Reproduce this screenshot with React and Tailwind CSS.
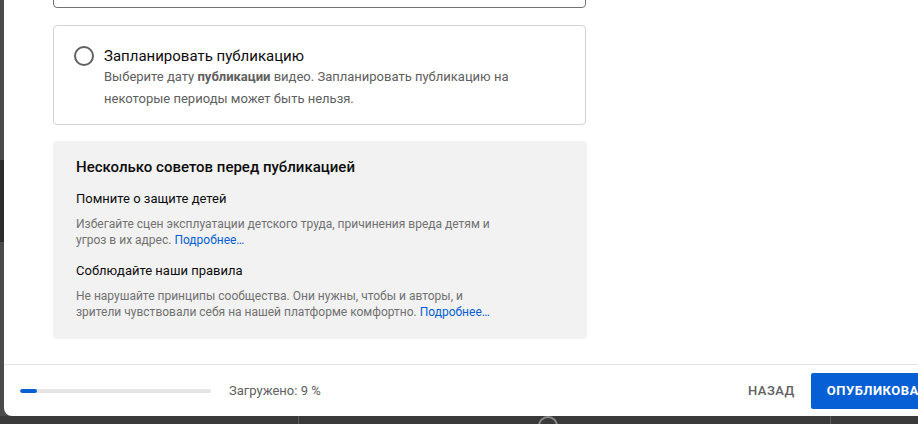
import React from "react";

const tips = [
  {
    title: "Помните о защите детей",
    text: "Избегайте сцен эксплуатации детского труда, причинения вреда детям и угроз в их адрес.",
  },
  {
    title: "Соблюдайте наши правила",
    text: "Не нарушайте принципы сообщества. Они нужны, чтобы и авторы, и зрители чувствовали себя на нашей платформе комфортно.",
  },
];

const App = () => {
  const progress = 9;

  return (
    <div className="relative w-[918px] h-[424px] overflow-hidden bg-[#4b4b4b] font-['Roboto','Liberation_Sans',sans-serif]">
      {/* backdrop behind the dialog */}
      <div className="absolute left-0 top-[160px] w-[6px] h-[82px] bg-[#2c2c2c]" />
      <div className="absolute left-0 top-[416px] w-[918px] h-[8px] bg-[#3a3a3a]" />
      <div className="absolute left-[298px] top-[416px] w-px h-[8px] bg-[#5a5a5a]" />
      <div className="absolute left-[830px] top-[416px] w-px h-[8px] bg-[#5a5a5a]" />
      <div className="absolute left-[538px] top-[416px] w-[20px] h-[20px] rounded-full border-2 border-[#8a8a8a]" />

      {/* dialog */}
      <div className="absolute left-[4px] top-0 w-[980px] h-[416px] bg-white rounded-bl-[8px] flex flex-col">
        <div className="flex-1 overflow-hidden pl-[49px]">
          <div className="w-[533px] h-[40px] -mt-[32px] border border-[#737373] rounded-[4px]" />

          {/* schedule option */}
          <div className="mt-[17px] w-[533px] h-[100px] border border-[#d3d3d3] rounded-[4px] pl-[20px] pt-[19px] flex gap-[10px]">
            <div className="mt-[1px] w-[20px] h-[20px] rounded-full border-2 border-[#606060] shrink-0" />
            <div className="w-[430px]">
              <div className="text-[15px] leading-[22px] text-[#0d0d0d]">
                Запланировать публикацию
              </div>
              <div className="-mt-[1px] text-[13px] leading-[22px] text-[#606060]">
                Выберите дату <span className="font-bold">публикации</span>{" "}
                видео. Запланировать публикацию на некоторые периоды может быть
                нельзя.
              </div>
            </div>
          </div>

          {/* tips */}
          <div className="mt-[16px] w-[534px] h-[198px] bg-[#f2f2f2] rounded-[4px] px-[23px] pt-[16px]">
            <div className="text-[15px] leading-[20px] font-medium text-[#0d0d0d]">
              Несколько советов перед публикацией
            </div>
            {tips.map((tip, i) => (
              <div key={tip.title} className={i === 0 ? "mt-[13px]" : "mt-[14px]"}>
                <div className="text-[13px] leading-[18px] text-[#0d0d0d]">
                  {tip.title}
                </div>
                <div className="mt-[8px] w-[432px] text-[12px] leading-[16px] text-[#717171]">
                  {tip.text}{" "}
                  <span className="text-[#065fd4]">Подробнее…</span>
                </div>
              </div>
            ))}
          </div>
        </div>

        {/* footer */}
        <div className="h-[52px] shrink-0 border-t border-[#e5e5e5] flex items-center pl-[16px]">
          <div className="w-[712px] flex items-center gap-[18px]">
            <div className="w-[191px] h-[4px] bg-[#e5e5e5] rounded-full overflow-hidden">
              <div
                className="h-full bg-[#065fd4] rounded-full"
                style={{ width: `${progress}%` }}
              />
            </div>
            <span className="text-[13px] text-[#606060]">
              Загружено: {progress} %
            </span>
          </div>
          <button className="h-[36px] px-[16px] text-[13px] font-medium tracking-[0.5px] text-[#606060]">
            НАЗАД
          </button>
          <button className="h-[36px] px-[16px] rounded-[2px] bg-[#065fd4] text-[13px] font-bold tracking-[0.5px] text-white">
            ОПУБЛИКОВАТЬ
          </button>
        </div>
      </div>
    </div>
  );
};

export default App;
